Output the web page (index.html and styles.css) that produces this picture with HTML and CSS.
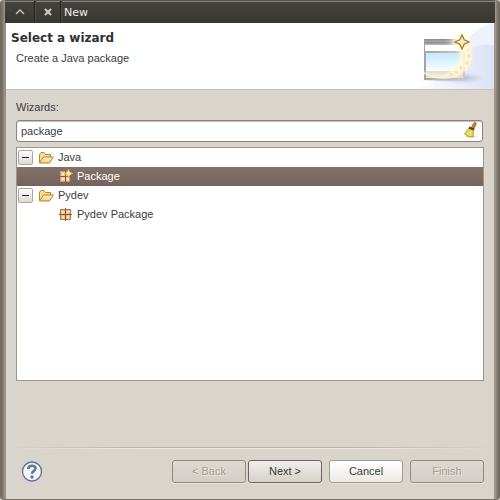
FILE: index.html
```html
<!DOCTYPE html>
<html lang="en">
<head>
<meta charset="utf-8">
<title>New</title>
<link rel="stylesheet" href="styles.css">
</head>
<body>
<div class="window">
  <header class="titlebar">
    <button class="win-btn" type="button" aria-label="Shade">
      <svg width="10" height="10" viewBox="0 0 10 10"><path d="M1 7L5 3L9 7" fill="none" stroke="#c9c5bd" stroke-width="1.4"/></svg>
    </button>
    <button class="win-btn" type="button" aria-label="Close">
      <svg width="10" height="10" viewBox="0 0 10 10"><path d="M2 2L8 8M8 2L2 8" fill="none" stroke="#d0ccc4" stroke-width="2"/></svg>
    </button>
    <span class="win-title">New</span>
  </header>
  <div class="body">
    <section class="banner">
      <div class="banner-text">
        <h1>Select a wizard</h1>
        <p>Create a Java package</p>
      </div>
      <svg class="banner-art" width="94" height="66" viewBox="0 0 94 66">
        <defs>
          <linearGradient id="sweep" x1="0" y1="0" x2="1" y2="0"><stop offset="0" stop-color="#fff"/><stop offset="1" stop-color="#dbe2f6"/></linearGradient>
          <linearGradient id="bar" x1="0" y1="0" x2="0" y2="1"><stop offset="0" stop-color="#858585"/><stop offset=".4" stop-color="#aaa"/><stop offset=".5" stop-color="#888"/><stop offset="1" stop-color="#bbb"/></linearGradient>
          <linearGradient id="barfade" x1="0" y1="0" x2="1" y2="0"><stop offset=".5" stop-color="#fff" stop-opacity="0"/><stop offset="1" stop-color="#fff" stop-opacity=".85"/></linearGradient>
          <linearGradient id="pane" x1="0" y1="0" x2="0" y2="1"><stop offset="0" stop-color="#c4e8fb"/><stop offset="1" stop-color="#fbfeff"/></linearGradient>
          <linearGradient id="edge" x1="0" y1="0" x2="1" y2="0"><stop offset="0" stop-color="#a4a4a4"/><stop offset="1" stop-color="#c9c9c9"/></linearGradient>
          <radialGradient id="shade"><stop offset="0" stop-color="#777799" stop-opacity=".5"/><stop offset="1" stop-color="#aaaacc" stop-opacity="0"/></radialGradient>
          <radialGradient id="glow"><stop offset="0" stop-color="#fffbd0"/><stop offset=".6" stop-color="#fffbd8" stop-opacity=".7"/><stop offset="1" stop-color="#fffbe0" stop-opacity="0"/></radialGradient>
          <linearGradient id="star" x1="0" y1="0" x2="1" y2="1"><stop offset="0" stop-color="#fff"/><stop offset="1" stop-color="#eed694"/></linearGradient>
          <filter id="soft" x="-20%" y="-20%" width="140%" height="140%"><feGaussianBlur stdDeviation="1.5"/></filter>
        </defs>
        <path d="M94 0C78 4 66 14 58 31C52 46 38 60 14 66H94Z" fill="url(#sweep)"/>
        <path d="M94 0C78 4 70 12 64 28C74 22 84 21 94 22Z" fill="#eef2fc"/>
        <ellipse cx="62" cy="55" rx="22" ry="6" fill="url(#shade)"/>
        <ellipse cx="43" cy="57" rx="24" ry="2" fill="url(#shade)"/>
        <rect x="24" y="16" width="41" height="41" fill="url(#edge)"/>
        <rect x="24" y="16" width="41" height="6" fill="url(#bar)"/>
        <rect x="24" y="16" width="41" height="6" fill="url(#barfade)"/>
        <rect x="25" y="22" width="39" height="6" fill="#fff"/>
        <rect x="26" y="30" width="37" height="18" fill="url(#pane)"/>
        <rect x="26" y="48" width="37" height="7" fill="#e2ded1"/>
        <path d="M68 20C76 34 70 48 54 53C41 57 29 55 22 48C32 53 42 53 50 49C60 44 60 32 59 24Z" fill="#fffad8" opacity=".85" filter="url(#soft)"/>
        <path d="M69 22C75 34 70 47 56 53C43 57 29 55 22 48" fill="none" stroke="#fff9d0" stroke-width="1.500" stroke-linecap="round" opacity=".7"/>
        <path d="M68 24V28M66 26H70M69 31V35M67 33H71M67 38V42M65 40H69M61 43V47M59 45H63M56 47V51M54 49H58M51 50V53M49 51H53" stroke="#f5df95" fill="none" opacity=".85"/>
        <circle cx="62" cy="19" r="12" fill="url(#glow)"/>
        <path d="M62 12L64.200 16.800L69 19L64.200 21.200L62 26L59.800 21.200L55 19L59.800 16.800Z" fill="url(#star)" stroke="#ac792e" stroke-width="1.3"/>
      </svg>
    </section>
    <main class="content">
      <label for="filter">Wizards:</label>
      <div class="search">
        <input id="filter" type="text" value="package">
        <button class="clear" type="button" aria-label="Clear">
          <svg width="16" height="18" viewBox="0 0 16 18">
            <ellipse cx="9" cy="14.500" rx="6" ry="1.200" fill="#ddd"/>
            <path d="M9 6L12 .5L14.500 1L12 7Z" fill="#c98235" stroke="#8c541e" stroke-width=".6"/>
            <path d="M6.500 6.500L11.500 8L11 15L6.500 14.500L2.500 12Z" fill="#e9d738" stroke="#9b8918" stroke-width=".7"/>
            <path d="M7 9L5 12.500M9 9L8 14" stroke="#fff597" stroke-width="1"/>
            <path d="M7 5.500L12 7.500" stroke="#444a4c" stroke-width="2"/>
          </svg>
        </button>
      </div>
      <svg class="symbols" width="0" height="0" aria-hidden="true">
        <defs>
          <linearGradient id="folderfill" x1="0" y1="0" x2="0" y2="1"><stop offset="0" stop-color="#fff5cf"/><stop offset="1" stop-color="#f3cf78"/></linearGradient>
          <symbol id="folder" viewBox="0 0 16 16">
            <path d="M1.500 12.500V4.500L3 2.500H6L7.500 4.500H12.500V7" fill="#f7dc94" stroke="#b9842b"/>
            <path d="M1.500 13L5.500 7H15.400L11.500 13Z" fill="url(#folderfill)" stroke="#b9842b"/>
          </symbol>
          <symbol id="pkg" viewBox="0 0 16 16">
            <path d="M3.500 2.500H13.500V12.500H3.500Z" fill="#eebf8e" stroke="#b07444"/>
            <path d="M8.500 1V14M2 7.500H15" stroke="#8a5236"/>
            <path d="M5 4H7V6H5ZM10 4H12V6H10ZM5 9H7V11H5ZM10 9H12V11H10Z" fill="#fbe3bd"/>
          </symbol>
        </defs>
      </svg>
      <ul class="tree">
        <li class="row"><button class="twist" type="button" aria-label="Collapse Java"></button><svg class="icon" width="16" height="16"><use href="#folder"/></svg><span>Java</span></li>
        <li class="row child selected"><svg class="icon" width="16" height="16" viewBox="0 0 16 16">
          <path d="M3.500 2.500H12.500V12.500H3.500Z" fill="#f0c8a6" stroke="#d69c76"/>
          <path d="M8.500 1V14M2 7.500H14" stroke="#8f5a42"/>
          <path d="M5 4H7V6H5ZM5 9H7V11H5ZM10 9H12V11H10Z" fill="#fbe6cf"/>
          <path d="M11.500 .5L12.700 3.300L15.500 4.500L12.700 5.700L11.500 8.500L10.300 5.700L7.500 4.500L10.300 3.300Z" fill="#fffbd8" stroke="#dfbd3b"/>
        </svg><span>Package</span></li>
        <li class="row"><button class="twist" type="button" aria-label="Collapse Pydev"></button><svg class="icon" width="16" height="16"><use href="#folder"/></svg><span>Pydev</span></li>
        <li class="row child"><svg class="icon" width="16" height="16"><use href="#pkg"/></svg><span>Pydev Package</span></li>
      </ul>
    </main>
    <footer class="footer">
      <button class="help" type="button" aria-label="Help">
        <svg width="22" height="22" viewBox="0 0 22 22">
          <circle cx="11" cy="10.500" r="9.500" fill="#f5f5f6" stroke="#5c7194" stroke-width="1.300"/>
          <path d="M7.300 8C7.300 3.700 14.800 3.700 14.500 7.500C14.300 10 11 9.800 11 12.800" fill="none" stroke="#60769c" stroke-width="2.600"/>
          <circle cx="11" cy="16" r="1.700" fill="#60769c"/>
        </svg>
      </button>
      <div class="nav">
        <button class="btn" type="button" disabled>&lt; Back</button>
        <button class="btn next" type="button">Next &gt;</button>
      </div>
      <button class="btn cancel" type="button">Cancel</button>
      <button class="btn" type="button" disabled>Finish</button>
    </footer>
  </div>
</div>
</body>
</html>
```
FILE: styles.css
```css
* { box-sizing: border-box; }

body {
  margin: 0;
  background: #d9d5cd;
  color: #3c3c3c;
  font: 11px/19px "Liberation Sans", Arial, sans-serif;
}

button, input { font: inherit; color: inherit; }

button {
  display: flex;
  align-items: center;
  justify-content: center;
  padding: 0;
  border: 0;
  background: none;
}

.window {
  display: flex;
  flex-direction: column;
  min-height: 100vh;
  padding: 0 6px;
  border-bottom: 1px solid #77726b;
  border-radius: 4px;
  background: linear-gradient(90deg, #6c655b 0, #81796e 3px, #a29a8e 5px, #8d8579 6px, #8d8579 calc(100% - 6px), #aaa297 calc(100% - 5px), #81796e calc(100% - 3px), #6c655b 100%);
}

.titlebar {
  display: flex;
  height: 23px;
  margin: 0 -1px;
  border-top: 1px solid #55514b;
  box-shadow: inset 0 1px #87827b;
  background: linear-gradient(#45433e, #383631);
}

.win-btn {
  width: 30px;
  padding-left: 1px;
  border-right: 1px solid #24221f;
  box-shadow: 1px 0 #504d47;
}

.win-btn + .win-btn { width: 26px; }

.win-title {
  padding-left: 3px;
  color: #f2efe9;
  font: 11px/23px "DejaVu Sans", sans-serif;
}

.body {
  display: flex;
  flex: 1;
  flex-direction: column;
  background: #d9d5cd;
}

.banner {
  display: flex;
  justify-content: space-between;
  height: 67px;
  border-bottom: 1px solid #c8c3ba;
  background: #fff;
}

.banner-text { padding: 5px; }

h1 {
  margin: 0;
  color: #303030;
  font: bold 12px/20px "DejaVu Sans", sans-serif;
}

p { margin: 1px 5px; }

.banner-art { display: block; }

.content {
  display: flex;
  flex: 1;
  flex-direction: column;
  padding: 8px 10px 66px;
}

label { margin-bottom: 3px; }

.search {
  display: flex;
  height: 22px;
  margin: 0 1px 5px 0;
  border: 1px solid #8d8278;
  border-radius: 3px;
  background: #fff;
  box-shadow: inset 0 1px #c9c3bc;
}

#filter {
  flex: 1;
  min-width: 0;
  padding: 0 4px;
  border: 0;
  outline: 0;
  background: transparent;
}

.clear { width: 24px; }

.symbols { position: absolute; }

.tree {
  flex: 1;
  margin: 0;
  padding: 0;
  border: 1px solid #a0958a;
  background: #fff;
  list-style: none;
}

.row {
  display: flex;
  align-items: center;
  height: 19px;
  padding-left: 1px;
}

.icon { margin: 0 4px 0 5px; }

.row .icon { flex: none; }

.child { padding-left: 35px; }

.selected {
  background: linear-gradient(#83726a, #75635b);
  color: #fff;
}

.twist {
  width: 15px;
  height: 15px;
  border: 1px solid #aaa49b;
  border-radius: 2px;
  background: linear-gradient(#fff, #ddd9d3);
}

.twist::before {
  width: 7px;
  height: 1px;
  background: #222;
  content: "";
}

.footer {
  display: flex;
  align-items: center;
  gap: 7px;
  height: 52px;
  padding: 0 10px 3px 15px;
  background: linear-gradient(90deg, transparent, #b7b0a6 30%, #b7b0a6 70%, transparent) top / 100% 1px no-repeat,
    linear-gradient(90deg, transparent, #eeeae4 30%, #eeeae4 70%, transparent) 0 1px / 100% 1px no-repeat;
}

.help { margin-right: auto; }

.nav { display: flex; gap: 2px; }

.btn {
  width: 74px;
  height: 23px;
  border: 1px solid #8f8a82;
  border-radius: 3px;
  background: linear-gradient(#dedad3, #d3cec6);
  box-shadow: 0 1px #e7e3dd;
}

.btn:disabled {
  color: #a39e95;
  text-shadow: 1px 1px #eeeae4;
}

.next {
  border-color: #6b655e;
  background: linear-gradient(#f0eeeb, #d6d1ca);
}

.cancel {
  border-color: #a09a91;
  background: linear-gradient(#fff, #ece9e4);
}
```
